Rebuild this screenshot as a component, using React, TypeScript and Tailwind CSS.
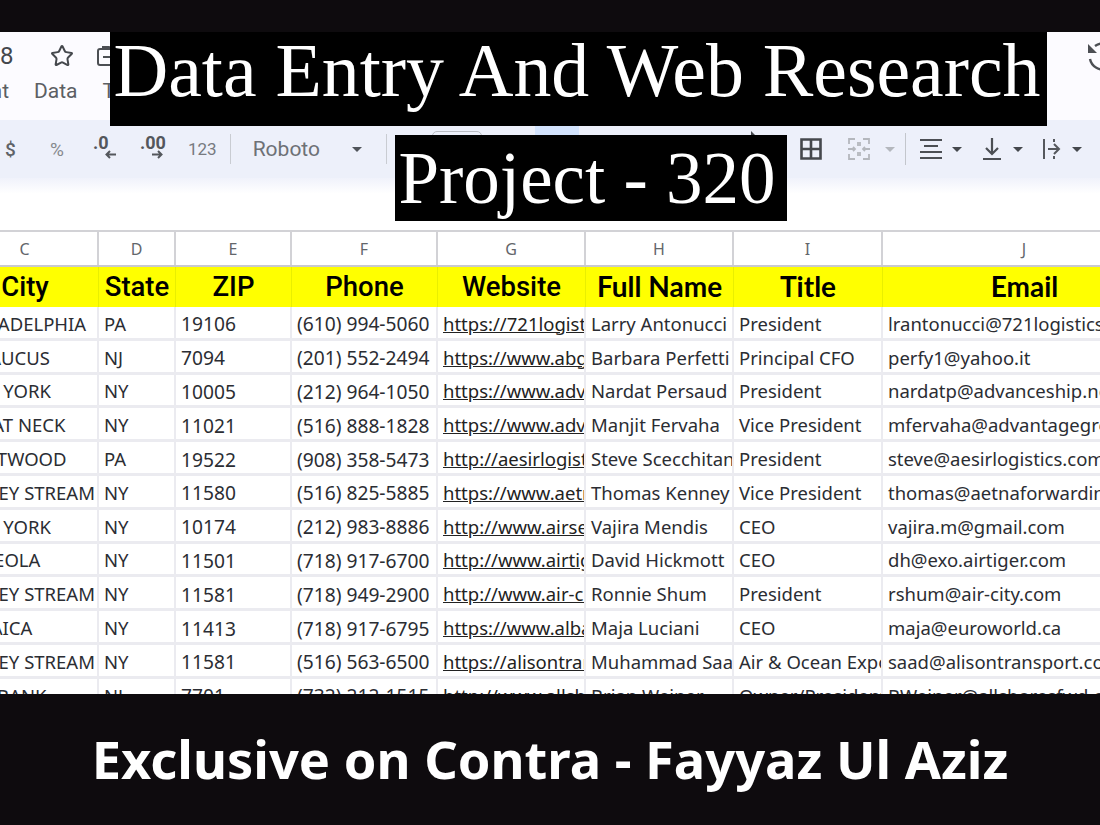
import React from 'react';
import { Star } from 'lucide-react';

const rows = [
    ['PHILADELPHIA', 'PA', '19106', '(610) 994-5060', 'https://721logistics.com', 'Larry Antonucci', 'President', 'lrantonucci@721logistics.com'],
    ['SECAUCUS', 'NJ', '7094', '(201) 552-2494', 'https://www.abgroup.com', 'Barbara Perfetti', 'Principal CFO', 'perfy1@yahoo.it'],
    ['NEW YORK', 'NY', '10005', '(212) 964-1050', 'https://www.advanceship.net', 'Nardat Persaud', 'President', 'nardatp@advanceship.net'],
    ['GREAT NECK', 'NY', '11021', '(516) 888-1828', 'https://www.advantagegroup.com', 'Manjit Fervaha', 'Vice President', 'mfervaha@advantagegroup.com'],
    ['FLEETWOOD', 'PA', '19522', '(908) 358-5473', 'http://aesirlogistics.com', 'Steve Scecchitano', 'President', 'steve@aesirlogistics.com'],
    ['VALLEY STREAM', 'NY', '11580', '(516) 825-5885', 'https://www.aetnaforwarding.com', 'Thomas Kenney', 'Vice President', 'thomas@aetnaforwarding.com'],
    ['NEW YORK', 'NY', '10174', '(212) 983-8886', 'http://www.airsea.com', 'Vajira Mendis', 'CEO', 'vajira.m@gmail.com'],
    ['MINEOLA', 'NY', '11501', '(718) 917-6700', 'http://www.airtiger.com', 'David Hickmott', 'CEO', 'dh@exo.airtiger.com'],
    ['VALLEY STREAM', 'NY', '11581', '(718) 949-2900', 'http://www.air-city.com', 'Ronnie Shum', 'President', 'rshum@air-city.com'],
    ['JAMAICA', 'NY', '11413', '(718) 917-6795', 'https://www.albatross.com', 'Maja Luciani', 'CEO', 'maja@euroworld.ca'],
    ['VALLEY STREAM', 'NY', '11581', '(516) 563-6500', 'https://alisontransport.com', 'Muhammad Saad', 'Air & Ocean Export', 'saad@alisontransport.com'],
    ['RED BANK', 'NJ', '7701', '(732) 212-1515', 'http://www.allshores.com', 'Brian Weiner', 'Owner/President', 'BWeiner@allshoresfwd.com'],
];

const letters = ['C', 'D', 'E', 'F', 'G', 'H', 'I', 'J'];
const roboto = ['City', 'State', 'ZIP', 'Phone', 'Website'];
const lato = ['Full Name', 'Title', 'Email'];
const gridCols = 'grid grid-cols-[147px_77px_116px_146px_148px_148px_149px_284px]';

const Caret: React.FC<{ color?: string }> = ({ color = '#50545a' }) => (
    <svg width="12" height="7" viewBox="0 0 12 7"><path d="M1 1h10L6 6z" fill={color} /></svg>
);

const Toolbar: React.FC = () => (
    <div className="h-[58px] flex items-center bg-[#edf0fa] text-[#5f6368] font-['Roboto',sans-serif]">
        <span className="ml-[5px] w-[12px] text-[19px] font-medium leading-none">$</span>
        <span className="ml-[33px] w-[17px] text-[19px] leading-none text-[#85888d]">%</span>
        <div className="ml-[26px] w-[24px] h-[30px] flex flex-col items-start text-[18px] leading-[18px] font-bold text-[#54575c]">
            <span>.0</span>
            <svg className="ml-[11px] mt-[-2px]" width="13" height="9" viewBox="0 0 13 9"><path d="M12 4.500H3M6 1L2.500 4.500 6 8" stroke="#54575c" strokeWidth="2" fill="none" /></svg>
        </div>
        <div className="ml-[23px] w-[25px] h-[30px] flex flex-col items-start text-[18px] leading-[18px] font-bold text-[#54575c]">
            <span>.00</span>
            <svg className="ml-[11px] mt-[-2px]" width="13" height="9" viewBox="0 0 13 9"><path d="M1 4.500h9M7 1l3.500 3.500L7 8" stroke="#54575c" strokeWidth="2" fill="none" /></svg>
        </div>
        <span className="ml-[23px] text-[17px] leading-none text-[#777a80]">123</span>
        <div className="ml-[13px] w-[1px] h-[30px] bg-[#c9ccd2]" />
        <span className="ml-[22px] w-[98px] text-[21px] leading-none text-[#6e7176]">Roboto</span>
        <Caret />
        <div className="ml-[23px] w-[1px] h-[30px] bg-[#c9ccd2]" />
        {/* covered by the second title box, only the top edge of these shows */}
        <div className="ml-[45px] w-[50px] h-[36px] rounded-[5px] border border-[#b9bcc2]" />
        <div className="ml-[53px] w-[44px] h-[46px] bg-[#d3e3fd]" />
        <svg className="ml-[171px]" width="9" height="36" viewBox="0 0 9 36"><path d="M1 0l6 6-6 6z" fill="#45484d" /></svg>
        <svg className="ml-[41px]" width="22" height="22" viewBox="0 0 22 22"><path d="M1.500 1.500h19v19h-19zM11 1.500v19M1.500 11h19" stroke="#45484d" strokeWidth="2.600" fill="none" /></svg>
        <svg className="ml-[25px]" width="24" height="24" viewBox="0 0 24 24" fill="none" stroke="#b4b7bd" strokeWidth="1.800">
            <path d="M2 7V2h6M16 2h6v5M2 17v5h6M16 22h6v-5M1 12h7M6 10l2 2-2 2M23 12h-7M18 10l-2 2 2 2" />
            <path d="M11 5v4M13 5v4M11 15v4M13 15v4" />
        </svg>
        <span className="ml-[13px]"><Caret color="#b4b7bd" /></span>
        <div className="ml-[9px] w-[1px] h-[32px] bg-[#c3c6cc]" />
        <svg className="ml-[14px]" width="22" height="22" viewBox="0 0 22 22"><path d="M0 2h22M4 8h14M0 14h22M0 20h22" stroke="#4c4f54" strokeWidth="2" fill="none" /></svg>
        <span className="ml-[9px]"><Caret color="#45484d" /></span>
        <svg className="ml-[19px]" width="20" height="24" viewBox="0 0 20 24"><path d="M10 1v15M4 11l6 6 6-6M1 22h18" stroke="#4c4f54" strokeWidth="2.200" fill="none" /></svg>
        <span className="ml-[10px]"><Caret color="#45484d" /></span>
        <svg className="ml-[18px]" width="20" height="22" viewBox="0 0 20 22"><path d="M2 1v20M6 11h11M12 6l5 5-5 5M12 1v3M12 18v3" stroke="#55585d" strokeWidth="2" fill="none" /></svg>
        <span className="ml-[9px]"><Caret color="#45484d" /></span>
    </div>
);

const App: React.FC = () => {
    return (
        <div className="relative w-[1100px] h-[825px] overflow-hidden bg-[#0e0b0e]">
            <div className="h-[32px]" />

            <div className="h-[662px] overflow-hidden bg-white">
                {/* menu rows */}
                <div className="h-[88px] bg-[#fcfbff] text-[#5f6368] font-['Roboto',sans-serif]">
                    <div className="h-[48px] flex items-center">
                        <span className="w-[15px] shrink-0 text-[24px] leading-none text-[#44474c]">8</span>
                        <Star className="ml-[35px] shrink-0 text-[#45484d]" size={24} strokeWidth={2} />
                        <svg className="ml-[23px] shrink-0" width="16" height="20" viewBox="0 0 16 20"><path d="M16 3H3a2 2 0 0 0-2 2v12a2 2 0 0 0 2 2h13M6 3V1h6l2 2M6 11h10" stroke="#4c4f54" strokeWidth="2" fill="none" /></svg>
                        <svg className="ml-[973px] shrink-0" width="30" height="30" viewBox="0 0 30 30">
                            <path d="M4 18A13 13 0 1 0 9 5" stroke="#4c4f54" strokeWidth="2.400" fill="none" />
                            <path d="M2 3v9h9z" fill="#4c4f54" />
                        </svg>
                    </div>
                    <div className="flex items-center h-[22px] text-[21px] leading-none text-[#5c5f64]">
                        <span className="w-[9px] overflow-hidden flex justify-end">nt</span>
                        <span className="ml-[25px]">Data</span>
                        <span className="ml-[25px]">T</span>
                    </div>
                </div>

                <Toolbar />

                <div className="h-[54px] bg-gradient-to-b from-[#f0f2fb] from-0% to-white to-30% border-b-2 border-[#d2d2d6]" />

                {/* spreadsheet */}
                <div className="ml-[-48px] w-[1220px] font-['Noto_Sans',sans-serif]">
                    <div className={`${gridCols} h-[35px] border-b-[2px] border-[#c9c9ce] bg-white text-[#63666b] text-[16px]`}>
                        {letters.map(l => (
                            <div key={l} className="flex items-center justify-center border-r-2 border-[#d2d2d6]">{l}</div>
                        ))}
                    </div>
                    <div className={`${gridCols} h-[40px] bg-[#ffff00] text-black leading-none`}>
                        {roboto.map(h => (
                            <div key={h} className="flex items-center justify-center border-r border-[#e9ef00] font-['Roboto',sans-serif] font-medium text-[27.500px] leading-none">{h}</div>
                        ))}
                        {lato.map(h => (
                            <div key={h} className="flex items-center justify-center pb-[2px] border-r border-[#e9ef00] font-['Lato',sans-serif] font-bold text-[28px] leading-none">{h}</div>
                        ))}
                    </div>
                    {rows.map((row, i) => (
                        <div key={i} className={`${gridCols} h-[33.8px] text-[#2b2d33]`}>
                            {row.map((cell, c) => (
                                <div
                                    key={c}
                                    className={`flex items-center overflow-hidden whitespace-nowrap leading-[1.2] pl-[5px] pt-[3px] border-b-[3px] border-r-[2px] border-[#ebebf0] ${c === 2 || c === 3 ? 'text-[19.200px]' : 'text-[18.500px]'} ${c === 4 ? 'underline text-[#222]' : ''}`}
                                >
                                    {cell}
                                </div>
                            ))}
                        </div>
                    ))}
                </div>
            </div>

            <div className="h-[131px] flex items-center justify-center">
                <span className="text-white text-[52.400px] font-bold leading-none font-['Noto_Sans',sans-serif]">Exclusive on Contra - Fayyaz Ul Aziz</span>
            </div>

            {/* title captions sit on top of the sheet */}
            <div className="absolute left-[110px] top-[32px] w-[937px] h-[94px] pb-[16px] pr-[3px] bg-black flex items-center justify-center">
                <span className="text-white text-[75.800px] leading-none font-['Liberation_Serif',serif]">Data Entry And Web Research</span>
            </div>
            <div className="absolute left-[395px] top-[135px] w-[392px] h-[86px] pr-[8px] bg-black flex items-center justify-center">
                <span className="text-white text-[73px] leading-none font-['Liberation_Serif',serif]">Project - 320</span>
            </div>
        </div>
    );
};

export default App;
